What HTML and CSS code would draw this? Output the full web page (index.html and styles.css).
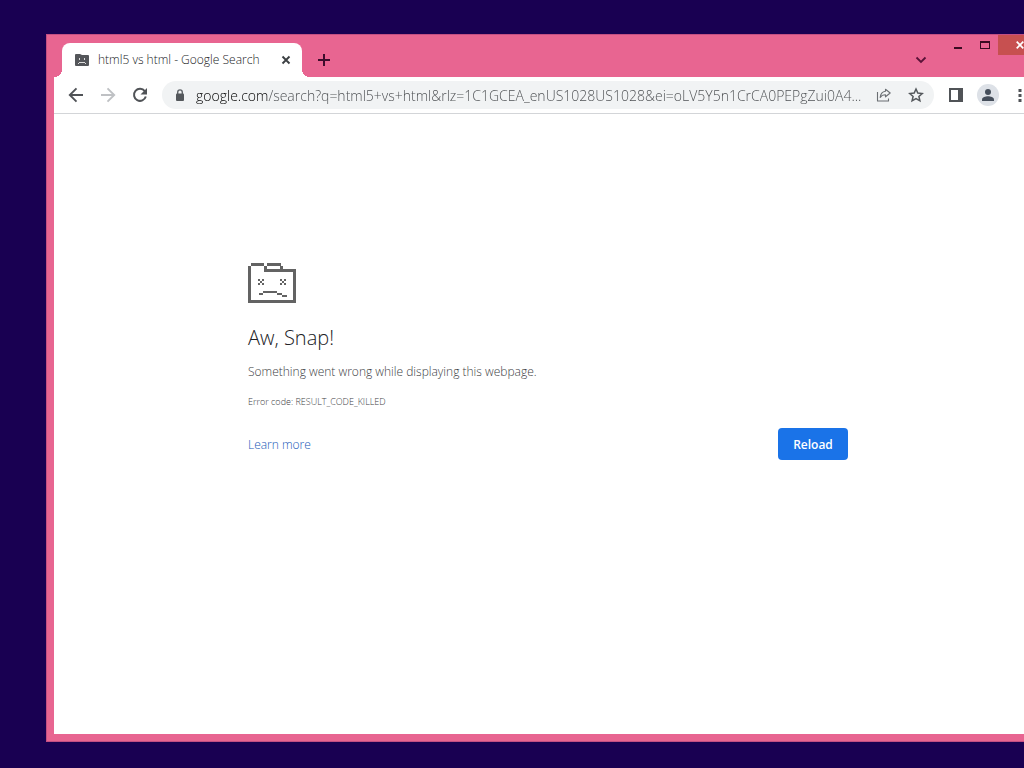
FILE: index.html
```html
<!DOCTYPE html>
<html lang="en">
<head>
    <meta charset="UTF-8">
    <meta name="viewport" content="width=device-width, initial-scale=1.0">
    <title>html5 vs html - Google Search</title>
    <link rel="stylesheet" href="styles.css">
</head>
<body>
    <div class="window">
        <header class="titlebar">
            <div class="tab">
                <svg class="tab-icon" width="14" height="12" viewBox="0 0 14 12">
                    <path fill="#54565a" d="M1 0h4l2 1h6a1 1 0 0 1 1 1v9a1 1 0 0 1-1 1H1a1 1 0 0 1-1-1V1a1 1 0 0 1 1-1z"/>
                    <path fill="#ddd" d="M4 4h1v2H4zM9 4h1v2H9zM3 9h1v1H3zM4 8h6v1H4zM10 9h1v1h-1z"/>
                </svg>
                <span class="tab-title">html5 vs html - Google Search</span>
                <button class="icon-button tab-close" aria-label="Close tab">
                    <svg width="10" height="10" viewBox="0 0 10 10"><path d="M1.500 1.500l7 7M8.500 1.500l-7 7" stroke="#3c4043" stroke-width="1.900"/></svg>
                </button>
            </div>
            <button class="icon-button new-tab" aria-label="New tab">
                <svg width="12" height="12" viewBox="0 0 12 12"><path d="M6 0v12M0 6h12" stroke="#3d0d2c" stroke-width="2"/></svg>
            </button>
            <button class="icon-button tab-search" aria-label="Search tabs">
                <svg width="12" height="8" viewBox="0 0 12 8"><path d="M1.500 1.500L6 6l4.500-4.500" fill="none" stroke="#5a1238" stroke-width="1.800"/></svg>
            </button>
            <div class="captions">
                <button class="caption" aria-label="Minimize">
                    <svg width="10" height="10" viewBox="0 0 10 10"><path fill="#3a0b22" d="M1 7h8v2H1z"/></svg>
                </button>
                <button class="caption" aria-label="Maximize">
                    <svg width="10" height="10" viewBox="0 0 10 10"><path fill="#3a0b22" fill-rule="evenodd" d="M0 1h10v8H0zM1 3v5h8V3z"/></svg>
                </button>
                <button class="caption caption-close" aria-label="Close">
                    <svg width="8" height="8" viewBox="0 0 8 8"><path d="M.7.7l6.600 6.600M7.300.7L.7 7.300" stroke="#fff" stroke-width="1.700"/></svg>
                </button>
            </div>
        </header>

        <nav class="toolbar">
            <button class="icon-button" aria-label="Back">
                <svg width="16" height="16" viewBox="0 0 16 16"><path d="M15 8H2M8.500 1.300L1.800 8l6.700 6.700" fill="none" stroke="#505357" stroke-width="1.900"/></svg>
            </button>
            <button class="icon-button" aria-label="Forward" disabled>
                <svg width="16" height="16" viewBox="0 0 16 16"><path d="M1 8h13M7.500 1.300L14.200 8l-6.700 6.700" fill="none" stroke="#bfc1c4" stroke-width="1.900"/></svg>
            </button>
            <button class="icon-button" aria-label="Reload page">
                <svg width="16" height="16" viewBox="0 0 16 16"><path d="M12.800 4.200A6 6 0 1 0 13.800 9.500" fill="none" stroke="#505357" stroke-width="2"/><path d="M15 1v6.500H8.500z" fill="#505357"/></svg>
            </button>
            <div class="omnibox">
                <svg class="lock" width="10" height="12" viewBox="0 0 10 12"><path d="M2.700 6V3.200a2.300 2.300 0 0 1 4.600 0V6" fill="none" stroke="#5f6368" stroke-width="1.400"/><rect x="1" y="4.500" width="8" height="7.500" rx="1" fill="#54585c"/></svg>
                <input class="address" type="text" aria-label="Address" value="google.com/search?q=html5+vs+html&amp;rlz=1C1GCEA_enUS1028US1028&amp;ei=oLV5Y5n1CrCA0PEPgZui0A4...">
                <button class="icon-button" aria-label="Share">
                    <svg width="16" height="14" viewBox="0 0 16 14"><path d="M1.500 4v9h11v-2.500M9.500 1.200l4.700 3.800-4.700 3.800V6.800C7 6.800 5.300 7.700 4.200 9.500c.3-3.300 2.100-5.700 5.300-6.200z" fill="none" stroke="#6b6f73" stroke-width="1.100" stroke-linejoin="round"/></svg>
                </button>
                <button class="icon-button" aria-label="Bookmark this page">
                    <svg width="16" height="16" viewBox="0 0 16 16"><path d="M8 2l1.800 4.100 4.400.4-3.300 2.900 1 4.400L8 11.500l-3.900 2.300 1-4.400-3.300-2.900 4.400-.4z" fill="none" stroke="#54585c" stroke-width="1.500"/></svg>
                </button>
            </div>
            <button class="icon-button" aria-label="Side panel">
                <svg width="14" height="14" viewBox="0 0 14 14"><path fill="#505357" fill-rule="evenodd" d="M0 0h14v14H0zM2 2v10h7V2z"/></svg>
            </button>
            <button class="icon-button" aria-label="Profile">
                <svg width="22" height="22" viewBox="0 0 22 22"><circle cx="11" cy="11" r="11" fill="#dde1e7"/><circle cx="11" cy="8" r="3" fill="#454e5b"/><path d="M5 17v-1.500C5 13.200 8.500 12.300 11 12.300s6 .9 6 3.200V17z" fill="#454e5b"/></svg>
            </button>
            <button class="icon-button" aria-label="Menu">
                <svg width="4" height="14" viewBox="0 0 4 14"><path fill="#505357" d="M.5 1h3v3h-3zM.5 6h3v3h-3zM.5 11h3v3h-3z"/></svg>
            </button>
        </nav>

        <main class="page">
            <div class="error">
                <svg class="error-icon" width="48" height="40" viewBox="0 0 48 40" shape-rendering="crispEdges">
                    <g fill="#636363">
                        <!-- folder outline -->
                        <path d="M3 0h13v3H3zM0 3h3v34H0zM0 37h48v3H0zM45 6h3v31h-3zM16 3h3v6h-3zM19 6h26v3H19zM19 0h14v3H19zM32 3h3v3h-3z"/>
                        <!-- eyes -->
                        <path d="M10 16h2v2h-2zM14 16h2v2h-2zM12 18h2v2h-2zM10 20h2v2h-2zM14 20h2v2h-2z"/>
                        <path d="M32 16h2v2h-2zM36 16h2v2h-2zM34 18h2v2h-2zM32 20h2v2h-2zM36 20h2v2h-2z"/>
                        <!-- mouth -->
                        <path d="M11 30h4v2h-4zM15 28h14v2H15zM29 30h5v2h-5zM34 32h5v2h-5z"/>
                    </g>
                </svg>
                <h1>Aw, Snap!</h1>
                <p class="message">Something went wrong while displaying this webpage.</p>
                <p class="code">Error code: RESULT_CODE_KILLED</p>
                <div class="actions">
                    <a href="#">Learn more</a>
                    <button class="reload">Reload</button>
                </div>
            </div>
        </main>
    </div>
</body>
</html>
```
FILE: styles.css
```css
* {
    box-sizing: border-box;
}

body {
    margin: 0;
    min-height: 100vh;
    display: flex;
    padding: 34px 0 26px 46px;
    background: #190052;
    font-family: "Open Sans", "Noto Sans", sans-serif;
    font-size: 12px;
    font-weight: 300;
    overflow: hidden;
}

button {
    font-family: inherit;
    border: none;
    cursor: pointer;
}

svg {
    display: block;
    flex-shrink: 0;
}

/* The window hangs over the right edge of the desktop */
.window {
    flex: 1;
    min-width: 0;
    margin-right: -26px;
    padding: 0 7px 7px;
    display: flex;
    flex-direction: column;
    background: #e86591;
    border: 1px solid #c34f83;
}

/* Tab strip */
.titlebar {
    display: flex;
    align-items: flex-end;
    height: 42px;
    padding-left: 8px;
}

.tab {
    position: relative;
    display: flex;
    align-items: center;
    width: 240px;
    height: 34px;
    padding: 0 6px 0 13px;
    background: #fff;
    border-radius: 8px 8px 0 0;
}

.tab::before,
.tab::after {
    content: "";
    position: absolute;
    bottom: 0;
    width: 8px;
    height: 8px;
}

.tab::before {
    right: 100%;
    background: radial-gradient(circle at 0 0, transparent 8px, #fff 8px);
}

.tab::after {
    left: 100%;
    background: radial-gradient(circle at 100% 0, transparent 8px, #fff 8px);
}

.tab-title {
    flex: 1;
    margin-left: 9px;
    color: #202124;
    line-height: 16px;
    white-space: nowrap;
}

.icon-button {
    display: flex;
    align-items: center;
    justify-content: center;
    flex-shrink: 0;
    width: 32px;
    height: 32px;
    padding: 0;
    background: none;
}

.tab-close {
    width: 20px;
    height: 20px;
}

.new-tab,
.tab-search {
    height: 34px;
}

.new-tab {
    margin-left: 6px;
}

.tab-search {
    margin-left: auto;
}

.captions {
    display: flex;
    align-self: flex-start;
    margin-left: 7px;
}

.caption {
    display: flex;
    align-items: center;
    justify-content: center;
    width: 27px;
    height: 20px;
    padding: 0;
    background: none;
}

.caption-close {
    width: 44px;
    background: #c75050;
}

/* Toolbar */
.toolbar {
    display: flex;
    align-items: center;
    height: 37px;
    padding: 0 6px;
    background: #fff;
    border-bottom: 1px solid #d3d5d8;
}

.omnibox {
    flex: 1;
    min-width: 0;
    display: flex;
    align-items: center;
    height: 28px;
    margin: 0 6px;
    padding: 0 2px 0 13px;
    background: #f1f3f4;
    border-radius: 14px;
}

/* Host name is darker than the rest of the address */
.address {
    flex: 1;
    min-width: 0;
    margin-left: 11px;
    padding: 0;
    border: none;
    outline: none;
    font-family: inherit;
    font-size: 14px;
    font-weight: inherit;
    color: transparent;
    background: linear-gradient(to right, #000 73px, #4a4d50 73px);
    -webkit-background-clip: text;
    background-clip: text;
}

/* Error page */
.page {
    flex: 1;
    padding: 149px 24px 0;
    background: #fff;
}

.error {
    max-width: 600px;
    margin: 0 auto;
    color: #3c4043;
}

.error h1 {
    margin: 20px 0 9px;
    font-size: 20px;
    font-weight: 300;
    line-height: 30px;
    color: #202124;
}

.message {
    margin: 0;
    line-height: 20px;
}

.code {
    margin: 10px 0 16px;
    font-size: 9px;
    line-height: 20px;
}

.actions {
    display: flex;
    align-items: center;
    justify-content: space-between;
}

.actions a {
    color: #1558b8;
    text-decoration: none;
}

.reload {
    width: 70px;
    height: 32px;
    padding: 0;
    border-radius: 4px;
    background: #1a73e8;
    color: #fff;
    font-size: 12px;
    font-weight: 600;
}
```
